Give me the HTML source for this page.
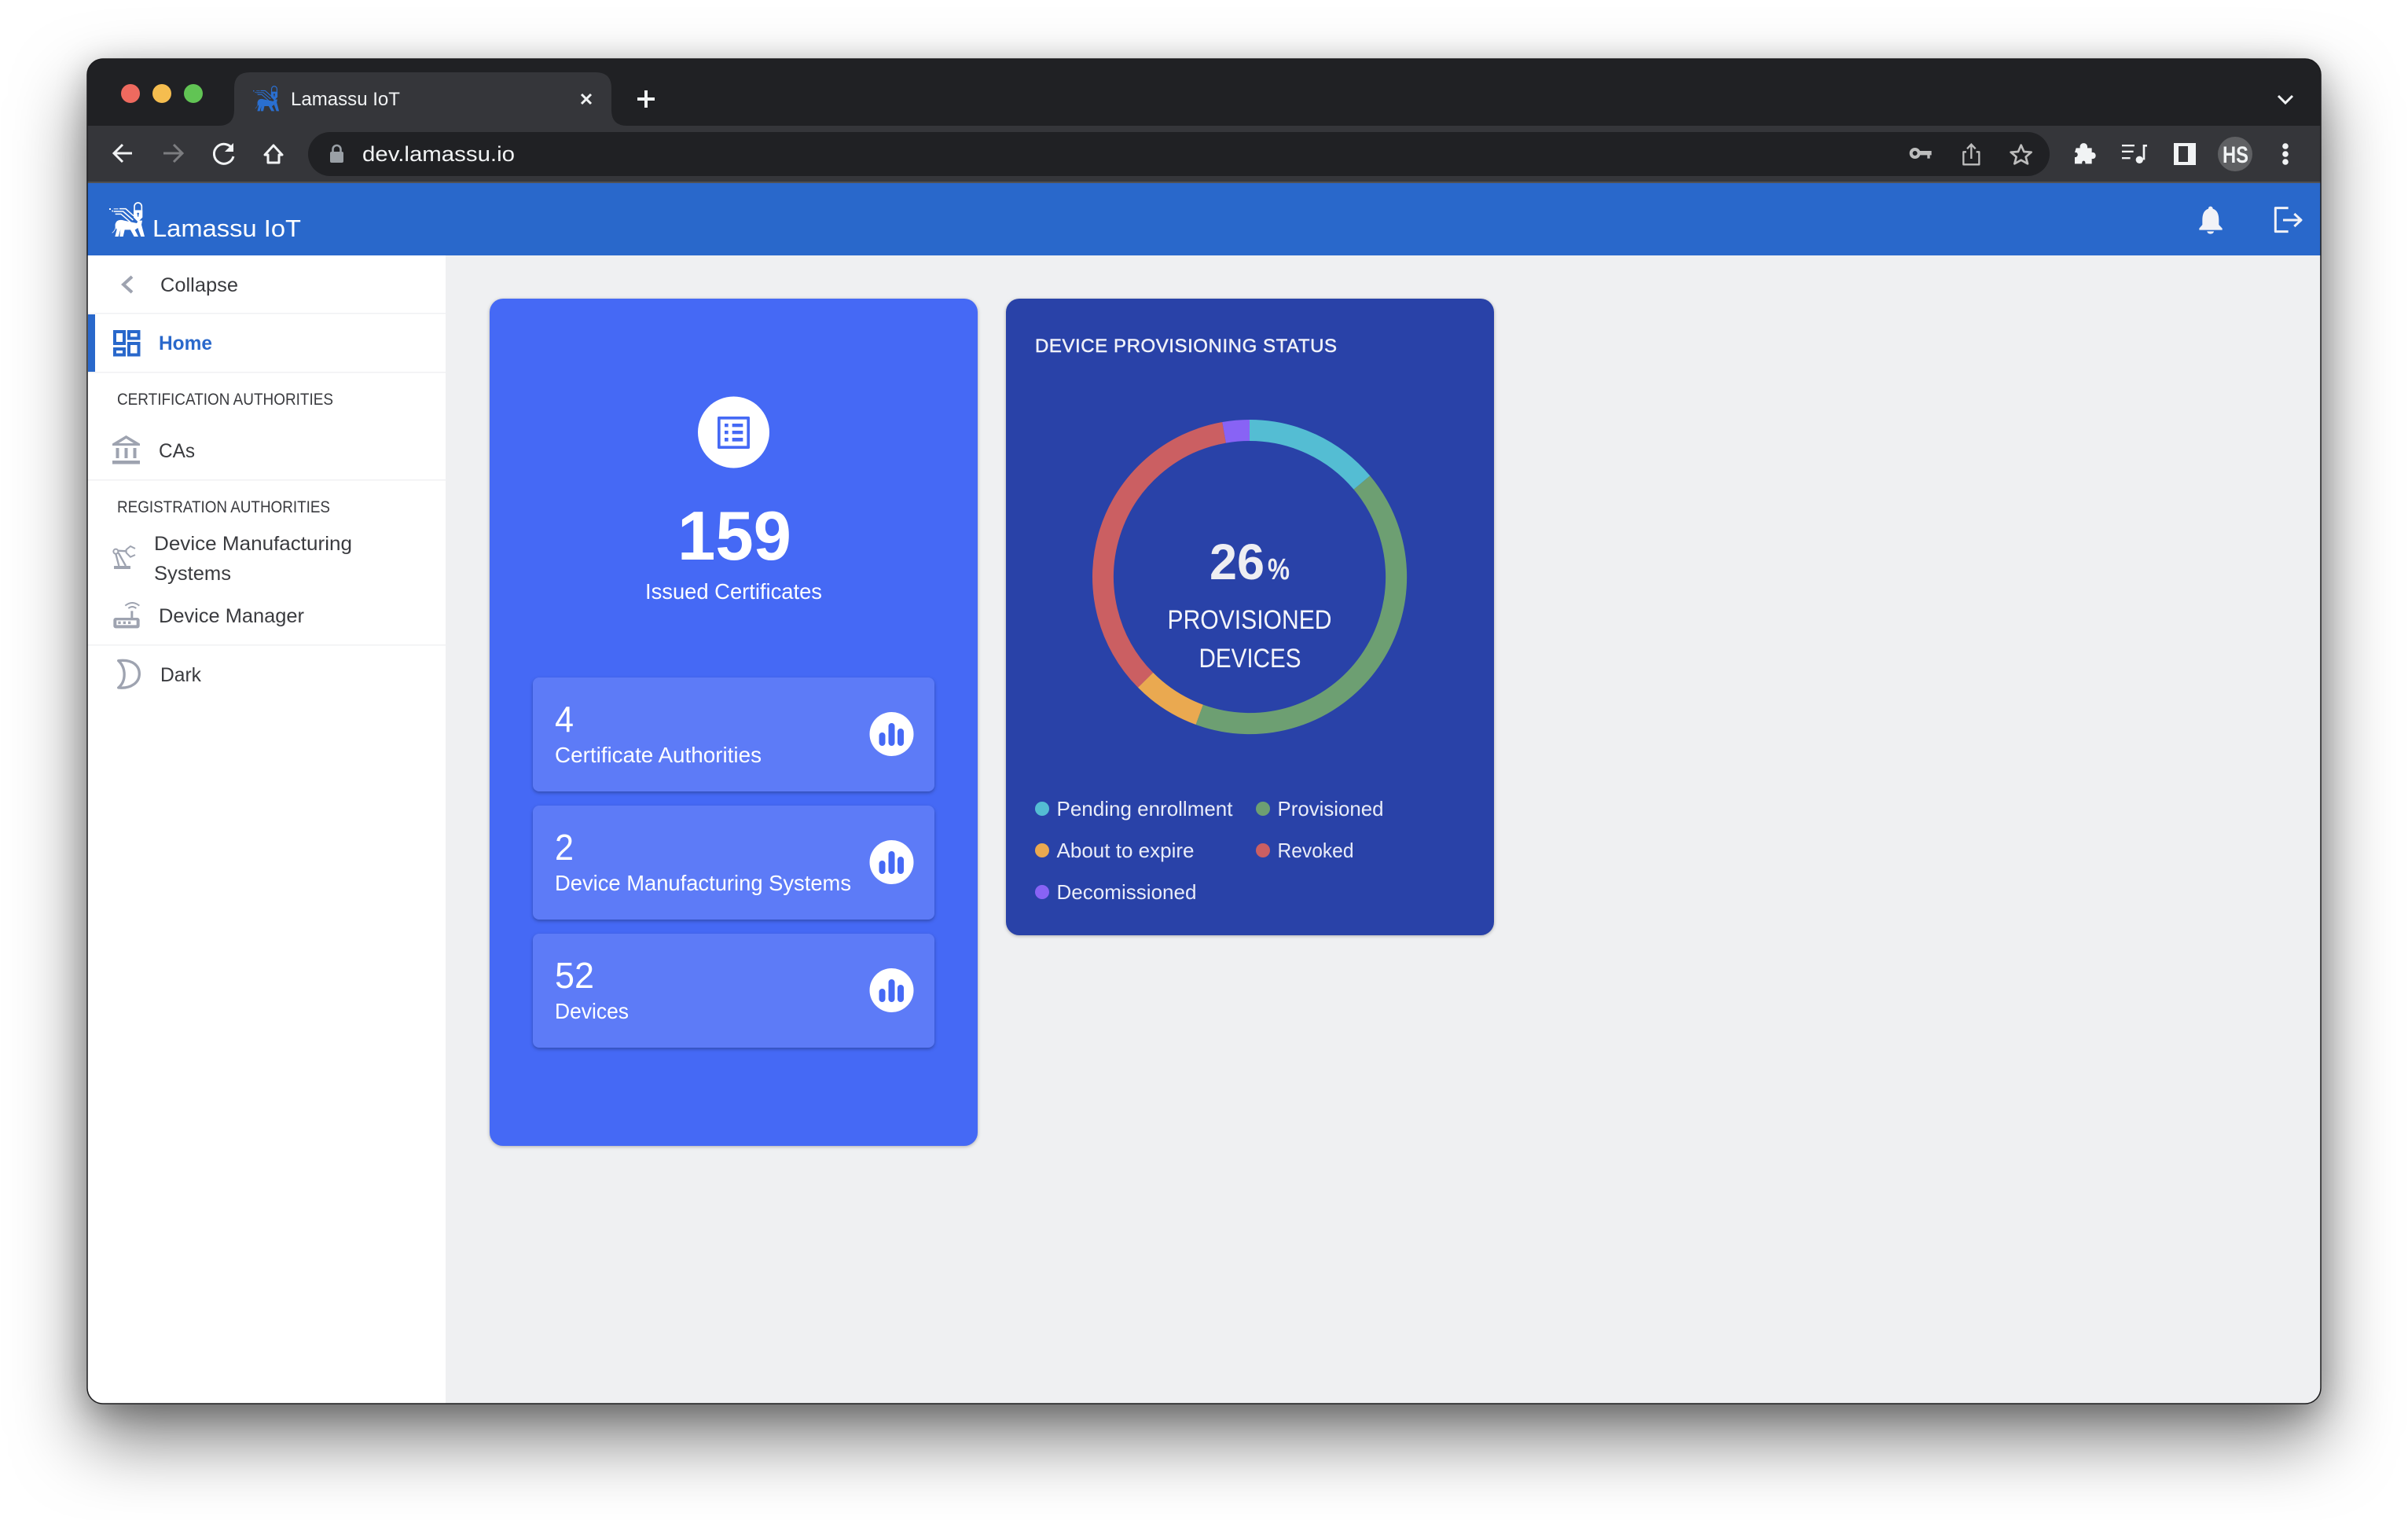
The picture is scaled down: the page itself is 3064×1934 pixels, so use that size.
<!DOCTYPE html>
<html><head><meta charset="utf-8"><title>Lamassu IoT</title>
<style>
html,body{margin:0;padding:0;background:#fff;width:3064px;height:1934px;overflow:hidden}
#w{position:absolute;left:111px;top:75px;width:2842px;height:1711px;border-radius:20px;background:#fff;box-shadow:0 44px 90px 2px rgba(0,0,0,.5),0 10px 40px rgba(0,0,0,.25)}
svg{position:absolute;left:0;top:0}
text{font-family:"Liberation Sans",sans-serif;dominant-baseline:alphabetic}
.s{fill:#3a3b3f;font-size:25px}
.h{fill:#3a3b3f;font-size:21px}
.w{fill:#fff}
.l{fill:#e9ecf8;font-size:26px}
.ic{fill:#9ea3b0}
</style></head><body>
<div id="w"></div>
<svg width="3064" height="1934" viewBox="0 0 3064 1934" xmlns="http://www.w3.org/2000/svg">
<defs>
<clipPath id="c"><rect x="111" y="75" width="2842" height="1711" rx="20"/></clipPath>
<g id="logo">
 <path d="M123 52V38a14 14 0 0 1 28 0V52" fill="none" stroke="currentColor" stroke-width="5"/>
 <path fill-rule="evenodd" d="M120 52H154V80L137 97L120 80ZM133 66a4 4 0 1 1 8 0q0 2-2 3v8h-4v-8q-2-1-2-3Z" fill="currentColor"/>
 <g fill="none" stroke="currentColor" stroke-width="4.500">
  <path d="M66 47H90L120 74"/><path d="M44 57H80L118 90"/><path d="M50 67H72L108 98"/>
 </g>
 <g fill="currentColor"><rect x="27" y="45" width="6" height="6"/><rect x="37" y="53" width="5" height="5"/><rect x="44" y="46" width="18" height="3"/></g>
 <path d="M50 105Q56 84 84 92L132 102L138 92H153L150 108L162 153H148L136 120L125 128L138 153H122L108 127H86L80 153H67L70 126L62 153H49L56 126Q48 118 50 105Z" fill="currentColor"/>
 <path d="M52 110Q52 130 38 139" fill="none" stroke="currentColor" stroke-width="2.400"/>
</g>
</defs>
<g clip-path="url(#c)">
<!-- chrome -->
<rect x="111" y="75" width="2842" height="85" fill="#202124"/>
<rect x="111" y="160" width="2842" height="72" fill="#35363a"/>
<rect x="111" y="231" width="2842" height="2" fill="#505154"/>
<path d="M278 160Q298 160 298 140V112Q298 92 318 92H758Q778 92 778 112V140Q778 160 798 160Z" fill="#35363a"/>
<circle cx="166" cy="119" r="12" fill="#ee6a5f"/><circle cx="206" cy="119" r="12" fill="#f5bd4f"/><circle cx="246" cy="119" r="12" fill="#61c454"/>
<use href="#logo" transform="translate(315.400,103.900) scale(.245)" style="color:#2a6fd0"/>
<text x="370" y="134" font-size="24" fill="#f1f3f4" textLength="139" lengthAdjust="spacingAndGlyphs">Lamassu IoT</text>
<path d="M740 120L752 132M752 120L740 132" stroke="#f1f3f4" stroke-width="3" fill="none"/>
<path d="M822 115V137M811 126H833" stroke="#f1f3f4" stroke-width="4" fill="none"/>
<path d="M2899 122L2908 131L2917 122" stroke="#f1f3f4" stroke-width="3" fill="none"/>
<g fill="none" stroke="#f1f3f4" stroke-width="3">
 <path d="M168 195H146M156 184L145 195L156 206"/>
 <path d="M208 195H231M221 184L232 195L221 206" stroke="#7c7d80"/>
 <path d="M296 190A12.500 12.500 0 1 0 297 199"/>
 <path d="M337 197L348 185L359 197H355V207H341V197Z" stroke-linejoin="round"/>
</g>
<path d="M297 182V193H286Z" fill="#f1f3f4"/>
<rect x="392" y="168" width="2216" height="56" rx="28" fill="#202124"/>
<rect x="420" y="193" width="17" height="14" rx="2" fill="#9aa0a6"/>
<path d="M423.500 194V190a5 5 0 0 1 10 0V194" fill="none" stroke="#9aa0a6" stroke-width="2.600"/>
<text x="461" y="205" font-size="27" fill="#f1f3f4" textLength="194" lengthAdjust="spacingAndGlyphs">dev.lamassu.io</text>
<g transform="translate(2420,170) scale(.3333)">
 <circle cx="50" cy="75" r="15" fill="none" stroke="#bdbdbd" stroke-width="12"/>
 <path d="M65 66H113V82H107V95H97V82H65Z" fill="#bdbdbd"/>
 <g fill="none" stroke="#bdbdbd" stroke-width="7">
  <path d="M246 70H235V118H295V70H284" stroke-linejoin="round"/>
  <path d="M265 96V42M249 58L265 41L281 58"/>
  <path d="M455 44L466 69L494 71L473 89L480 115L455 101L430 115L437 89L416 71L444 69Z" stroke-linejoin="round" stroke-width="8"/>
 </g>
 <path d="M665 55H680C676 30 712 30 708 55H725V72C745 68 745 100 725 96V115H700C703 100 685 100 688 115H660V90C675 92 675 68 660 72Z" fill="#f1f3f4"/>
 <g fill="#f1f3f4">
  <rect x="840" y="42" width="48" height="7"/><rect x="840" y="65" width="44" height="7"/><rect x="840" y="90" width="32" height="7"/>
  <path d="M920 42H936V50H928V100H920Z"/><circle cx="907" cy="100" r="14"/>
 </g>
</g>
<path fill-rule="evenodd" d="M2766 182H2794V210H2766ZM2772 186V206H2784V186Z" fill="#f1f3f4"/>
<circle cx="2844" cy="196" r="22" fill="#5f6063"/>
<text x="2828" y="207" font-size="30" font-weight="bold" fill="#f1f3f4" textLength="33" lengthAdjust="spacingAndGlyphs">HS</text>
<circle cx="2908" cy="186" r="3.800" fill="#f1f3f4"/><circle cx="2908" cy="196" r="3.800" fill="#f1f3f4"/><circle cx="2908" cy="206" r="3.800" fill="#f1f3f4"/>

<!-- header -->
<rect x="111" y="233" width="2842" height="92" fill="#2968cb"/>
<use href="#logo" transform="translate(130,250) scale(.3333)" style="color:#fff"/>
<text x="194" y="301" font-size="31" fill="#fff" textLength="189" lengthAdjust="spacingAndGlyphs">Lamassu IoT</text>
<g transform="translate(2790,250) scale(.3333)" fill="#f1f2f7">
 <path d="M68 38c-6 0-8 5-8 9C42 53 37 70 37 90V108L25 122V128H113V122L100 108V90C100 70 95 53 77 47C77 43 74 38 68 38Z"/>
 <path d="M55 133H81A13 10 0 0 1 55 133Z"/>
 <path d="M365 44H316V134H365M345 90H410M388 66L414 90L388 114" fill="none" stroke="#f1f2f7" stroke-width="9" stroke-linejoin="round"/>
</g>

<!-- body -->
<rect x="567" y="325" width="2386" height="1461" fill="#eff0f2"/>
<rect x="111" y="325" width="456" height="1461" fill="#fff"/>
<g fill="#f0f1f3">
 <rect x="111" y="398" width="456" height="1.500"/><rect x="111" y="473" width="456" height="1.500"/><rect x="111" y="610" width="456" height="1.500"/><rect x="111" y="820" width="456" height="1.500"/>
</g>
<rect x="112" y="400" width="9" height="73" fill="#2968cb"/>
<path d="M168 352L157 362L168 372" fill="none" stroke="#9ea3b0" stroke-width="4"/>
<text class="s" x="204" y="371" textLength="99" lengthAdjust="spacingAndGlyphs">Collapse</text>
<g fill="none" stroke="#2968cb" stroke-width="4">
 <rect x="146" y="422" width="12" height="15"/><rect x="164" y="422" width="12.500" height="8.500"/><rect x="146" y="444" width="12" height="7.500"/><rect x="164" y="437" width="12.500" height="14.500"/>
</g>
<text x="202" y="445" font-size="25" font-weight="bold" fill="#2968cb" textLength="68" lengthAdjust="spacingAndGlyphs">Home</text>
<text class="h" x="149" y="515" textLength="275" lengthAdjust="spacingAndGlyphs">CERTIFICATION AUTHORITIES</text>
<g class="ic">
 <path fill-rule="evenodd" d="M160.500 554L178 564.500V567H143V564.500ZM160.500 558L151 564H170Z"/>
 <rect x="147.500" y="570" width="4" height="13"/><rect x="158.500" y="570" width="4" height="13"/><rect x="169.500" y="570" width="4" height="13"/>
 <rect x="143" y="586" width="35" height="4.500"/>
</g>
<text class="s" x="202" y="582" textLength="46" lengthAdjust="spacingAndGlyphs">CAs</text>
<text class="h" x="149" y="652" textLength="271" lengthAdjust="spacingAndGlyphs">REGISTRATION AUTHORITIES</text>
<text class="s" x="196" y="700" textLength="252" lengthAdjust="spacingAndGlyphs">Device Manufacturing</text>
<text class="s" x="196" y="738" textLength="98" lengthAdjust="spacingAndGlyphs">Systems</text>
<text class="s" x="202" y="792" textLength="185" lengthAdjust="spacingAndGlyphs">Device Manager</text>
<text class="s" x="204" y="867" textLength="52" lengthAdjust="spacingAndGlyphs">Dark</text>
<g transform="translate(130,680) scale(.3333)">
 <rect x="45" y="120" width="63" height="12" rx="2" fill="#9ea3b0"/>
 <circle cx="52" cy="65" r="9" fill="#fff" stroke="#9ea3b0" stroke-width="6"/>
 <path d="M52 74L64 120M62 70L90 120M60 62L92 64" stroke="#9ea3b0" stroke-width="7" fill="none"/>
 <path d="M126 54L108 45L92 58V70L108 86L126 78" stroke="#9ea3b0" stroke-width="6" fill="none"/>
 <rect x="43" y="318" width="100" height="40" rx="9" fill="#9ea3b0"/>
 <rect x="55" y="328" width="76" height="18" fill="#fff"/>
 <rect x="61" y="332" width="10" height="10" fill="#9ea3b0"/><rect x="80" y="332" width="10" height="10" fill="#9ea3b0"/><rect x="99" y="332" width="10" height="10" fill="#9ea3b0"/>
 <rect x="109" y="292" width="9" height="28" fill="#9ea3b0"/>
 <path d="M100 282Q115 270 130 282M88 272Q115 250 142 272" fill="none" stroke="#9ea3b0" stroke-width="6"/>
 <path d="M62 482C120 475 142 505 142 532C142 565 110 590 62 585C92 560 92 510 62 482Z" fill="none" stroke="#9ea3b0" stroke-width="10" stroke-linejoin="round"/>
</g>

<!-- card 1 -->
<rect x="623" y="380" width="621" height="1078" rx="17" fill="#4569f5" style="filter:drop-shadow(0 1px 2px rgba(0,0,0,.28))"/>
<circle cx="933.500" cy="550" r="45.500" fill="#fff"/>
<g transform="translate(880,500) scale(.3333)">
 <rect x="99" y="90" width="123" height="123" rx="5" fill="#4569f5"/><rect x="110" y="101" width="101" height="101" fill="#fff"/>
 <g fill="#4569f5"><rect x="126" y="117" width="14" height="13"/><rect x="126" y="144" width="14" height="13"/><rect x="126" y="171" width="14" height="14"/><rect x="155" y="117" width="41" height="13"/><rect x="155" y="144" width="41" height="13"/><rect x="155" y="171" width="41" height="14"/></g>
</g>
<text class="w" x="862" y="712" font-size="88" font-weight="bold" textLength="145" lengthAdjust="spacingAndGlyphs">159</text>
<text class="w" x="821" y="762" font-size="28" textLength="225" lengthAdjust="spacingAndGlyphs">Issued Certificates</text>

<g id="sc">
 <rect x="678" y="862" width="511" height="145" rx="8" fill="#5d7bf7" style="filter:drop-shadow(0 2px 2px rgba(0,0,0,.28))"/>
 <rect x="678" y="1025" width="511" height="145" rx="8" fill="#5d7bf7" style="filter:drop-shadow(0 2px 2px rgba(0,0,0,.28))"/>
 <rect x="678" y="1188" width="511" height="145" rx="8" fill="#5d7bf7" style="filter:drop-shadow(0 2px 2px rgba(0,0,0,.28))"/>
</g>
<text class="w" x="706" y="931" font-size="46" textLength="24" lengthAdjust="spacingAndGlyphs">4</text>
<text class="w" x="706" y="970" font-size="28" textLength="263" lengthAdjust="spacingAndGlyphs">Certificate Authorities</text>
<text class="w" x="706" y="1094" font-size="46" textLength="24" lengthAdjust="spacingAndGlyphs">2</text>
<text class="w" x="706" y="1133" font-size="28" textLength="377" lengthAdjust="spacingAndGlyphs">Device Manufacturing Systems</text>
<text class="w" x="706" y="1257" font-size="46" textLength="50" lengthAdjust="spacingAndGlyphs">52</text>
<text class="w" x="706" y="1296" font-size="28" textLength="94" lengthAdjust="spacingAndGlyphs">Devices</text>
<g>
 <circle cx="1134.500" cy="934" r="28" fill="#fff"/>
 <path d="M1122.500 936V945M1134.500 924V945M1146 931V945" stroke="#4569f5" stroke-width="8" stroke-linecap="round"/>
 <circle cx="1134.500" cy="1097" r="28" fill="#fff"/>
 <path d="M1122.500 1099V1108M1134.500 1087V1108M1146 1094V1108" stroke="#4569f5" stroke-width="8" stroke-linecap="round"/>
 <circle cx="1134.500" cy="1260" r="28" fill="#fff"/>
 <path d="M1122.500 1262V1271M1134.500 1250V1271M1146 1257V1271" stroke="#4569f5" stroke-width="8" stroke-linecap="round"/>
</g>

<!-- card 2 -->
<rect x="1280" y="380" width="621" height="810" rx="17" fill="#2942a8" style="filter:drop-shadow(0 1px 2px rgba(0,0,0,.28))"/>
<text x="1317" y="448" font-size="24" fill="#f0f1f8" stroke="#f0f1f8" stroke-width=".5" textLength="384" lengthAdjust="spacing">DEVICE PROVISIONING STATUS</text>
<g fill="none" stroke-width="27" transform="translate(1590,734)">
 <path stroke="#54bdd3" d="M0 -186.500A186.500 186.500 0 0 1 142.900 -119.900"/>
 <path stroke="#6d9f72" d="M142.900 -119.900A186.500 186.500 0 0 1 -63.800 175.300"/>
 <path stroke="#eaa950" d="M-63.800 175.300A186.500 186.500 0 0 1 -132.400 131.300"/>
 <path stroke="#cb5f62" d="M-132.400 131.300A186.500 186.500 0 0 1 -32.400 -183.700"/>
 <path stroke="#8863f5" d="M-32.400 -183.700A186.500 186.500 0 0 1 0 -186.500"/>
</g>
<text x="1539" y="737" font-size="64" font-weight="bold" fill="#eeeef2" textLength="70" lengthAdjust="spacingAndGlyphs">26</text>
<text x="1613" y="737" font-size="38" font-weight="bold" fill="#eeeef2" textLength="28" lengthAdjust="spacingAndGlyphs">%</text>
<text x="1485.500" y="800" font-size="34" fill="#f4f5fa" textLength="209" lengthAdjust="spacingAndGlyphs">PROVISIONED</text>
<text x="1525.500" y="849" font-size="34" fill="#f4f5fa" textLength="130" lengthAdjust="spacingAndGlyphs">DEVICES</text>
<circle cx="1326" cy="1029" r="9" fill="#54bdd3"/><circle cx="1607" cy="1029" r="9" fill="#6d9f72"/>
<circle cx="1326" cy="1082" r="9" fill="#eaa950"/><circle cx="1607" cy="1082" r="9" fill="#cb5f62"/>
<circle cx="1326" cy="1135" r="9" fill="#8863f5"/>
<text class="l" x="1344.500" y="1038" textLength="224" lengthAdjust="spacingAndGlyphs">Pending enrollment</text>
<text class="l" x="1625.500" y="1038" textLength="135" lengthAdjust="spacingAndGlyphs">Provisioned</text>
<text class="l" x="1344.500" y="1091" textLength="175" lengthAdjust="spacingAndGlyphs">About to expire</text>
<text class="l" x="1625.500" y="1091" textLength="97" lengthAdjust="spacingAndGlyphs">Revoked</text>
<text class="l" x="1344.500" y="1144" textLength="178" lengthAdjust="spacingAndGlyphs">Decomissioned</text>
</g>
<rect x="111" y="75" width="2842" height="1711" rx="20" fill="none" stroke="#1c1c1e" stroke-width="1.500"/>
</svg>
</body></html>
